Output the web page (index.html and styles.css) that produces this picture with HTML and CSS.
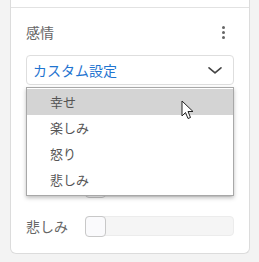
FILE: index.html
```html
<!DOCTYPE html>
<html>
<head>
    <title>感情</title>
    <link rel="stylesheet" href="styles.css">
</head>
<body>
    <div class="panel">
        <div class="panel-top"></div>
        <div class="section">
            <div class="section-head">
                <span class="section-title">感情</span>
                <span class="kebab"><i></i><i></i><i></i></span>
            </div>

            <div class="select-wrap">
                <div class="select">
                    <span class="select-value">カスタム設定</span>
                    <svg class="chevron" width="16" height="9" viewBox="0 0 16 9">
                        <path d="M2 1.8 L8 6.8 L14 1.8" fill="none" stroke="#444" stroke-width="1.6" stroke-linecap="round" stroke-linejoin="round"/>
                    </svg>
                </div>
                <div class="dropdown-list">
                    <div class="dropdown-item active">幸せ</div>
                    <div class="dropdown-item">楽しみ</div>
                    <div class="dropdown-item">怒り</div>
                    <div class="dropdown-item">悲しみ</div>
                </div>
                <svg class="cursor" width="14" height="20" viewBox="0 0 14 20">
                    <path d="M1 1 L1 16 L4.5 12.5 L7 18.5 L9.5 17.5 L7 11.5 L12 11.5 Z" fill="#fff" stroke="#222" stroke-width="1" stroke-linejoin="round"/>
                </svg>
            </div>

            <div class="sliders">
                <div class="slider-row">
                    <span class="slider-label">幸せ</span>
                    <div class="track"><div class="thumb"></div></div>
                </div>
                <div class="slider-row">
                    <span class="slider-label">楽しみ</span>
                    <div class="track"><div class="thumb"></div></div>
                </div>
                <div class="slider-row">
                    <span class="slider-label">怒り</span>
                    <div class="track"><div class="thumb"></div></div>
                </div>
                <div class="slider-row">
                    <span class="slider-label">悲しみ</span>
                    <div class="track"><div class="thumb"></div></div>
                </div>
            </div>
        </div>
    </div>
</body>
</html>
```

FILE: styles.css
```css
body {
    margin: 0;
    background: #f3f3f3;
    font-family: "Noto Sans CJK JP", "Noto Sans", sans-serif;
}

.panel {
    margin-left: 10px;
    width: 238px;
    background: #fff;
    border: 1px solid #dcdcdc;
    border-top: none;
    border-radius: 0 0 6px 6px;
}

.panel-top {
    height: 7px;
    border-bottom: 1px solid #e2e2e2;
}

.section {
    padding: 14px 15px 17px 15px;
}

.section-head {
    display: flex;
    justify-content: space-between;
    align-items: center;
    height: 20px;
}

.section-title {
    font-size: 14px;
    color: #666;
    line-height: 20px;
}

.kebab {
    display: flex;
    flex-direction: column;
    gap: 2px;
    margin-right: 9px;
}

.kebab i {
    display: block;
    width: 3px;
    height: 3px;
    border-radius: 50%;
    background: #666;
}

.select-wrap {
    position: relative;
    margin-top: 13px;
}

.select {
    display: flex;
    justify-content: space-between;
    align-items: center;
    height: 28px;
    border: 1px solid #dedede;
    border-radius: 4px;
    padding: 0 10px 0 6px;
}

.select-value {
    font-size: 14px;
    color: #1f74d0;
}

.dropdown-list {
    position: absolute;
    top: 32px;
    left: 0;
    right: 0;
    background: #fff;
    border: 1px solid #a8a8a8;
    box-shadow: 0 2px 4px rgba(0,0,0,0.25);
    padding: 1px 0 2px;
    z-index: 10;
}

.dropdown-item {
    height: 26px;
    line-height: 26px;
    padding-left: 23px;
    font-size: 13px;
    color: #555;
}

.dropdown-item.active {
    background: #d4d4d4;
}

.cursor {
    position: absolute;
    left: 155px;
    top: 45px;
    z-index: 20;
}

.sliders {
    margin-top: 14px;
    display: flex;
    flex-direction: column;
    gap: 19px;
}

.slider-row {
    display: flex;
    align-items: center;
    height: 20px;
}

.slider-label {
    width: 59px;
    font-size: 14px;
    line-height: 16px;
    color: #666;
}

.track {
    flex: 1;
    height: 18px;
    background: #f5f5f5;
    border: 1px solid #ececec;
    border-radius: 4px;
    position: relative;
}

.thumb {
    position: absolute;
    left: -1px;
    top: -1px;
    width: 19px;
    height: 19px;
    background: #fafafc;
    border: 1px solid #c8c8c8;
    border-radius: 4px;
}
```
